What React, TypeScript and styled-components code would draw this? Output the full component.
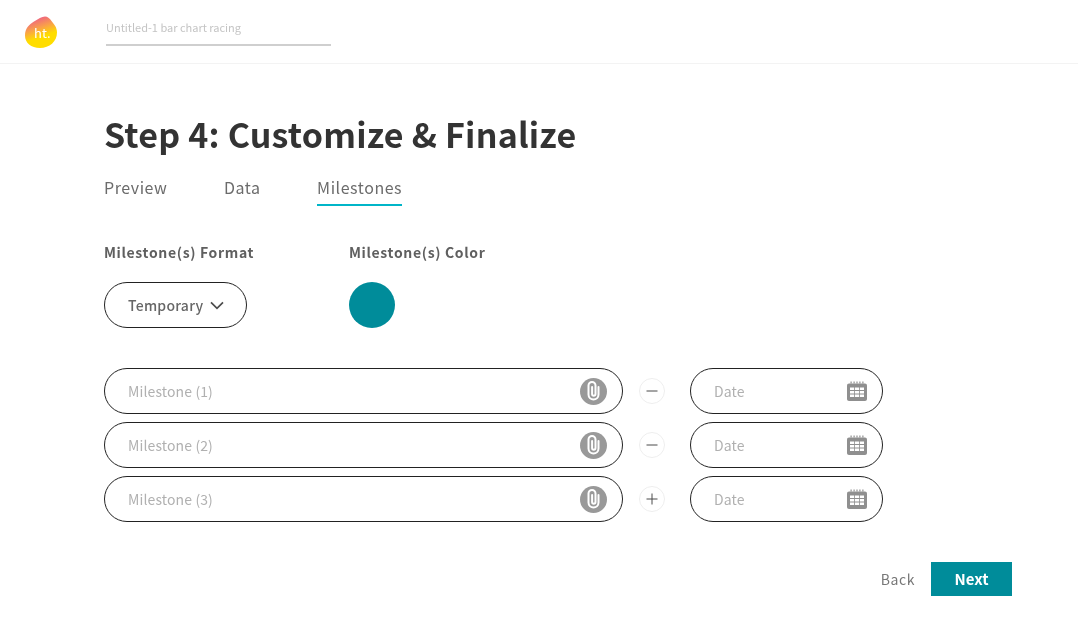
import React from 'react';
import styled, { createGlobalStyle } from 'styled-components';

const GlobalStyle = createGlobalStyle`
  * { box-sizing: border-box; }
  html, body { margin: 0; padding: 0; background: #fff; }
  body { font-family: "Noto Sans CJK SC", "Noto Sans", sans-serif; }
`;

const Page = styled.div`
  width: 1078px;
  height: 644px;
  overflow: hidden;
  background: #fff;
`;

const Header = styled.header`
  height: 64px;
  border-bottom: 1px solid #f3f3f3;
  display: flex;
  align-items: flex-start;
  padding: 15px 0 0 24px;
  will-change: opacity;
`;

const LogoWrap = styled.div`
  position: relative;
  width: 34px;
  height: 34px;
  margin-right: 48px;
  > span {
    position: absolute;
    left: 10px;
    top: 8px;
    color: #fff;
    font-size: 13px;
    line-height: 20px;
  }
`;

const ProjectTitle = styled.div`
  width: 225px;
  height: 31px;
  padding-top: 4px;
  border-bottom: 2px solid #cfcfcf;
  font-size: 11px;
  line-height: 16px;
  color: #c4c4c4;
`;

const Main = styled.main`
  padding: 47px 0 0 104px;
  will-change: opacity;
`;

const Title = styled.h1`
  margin: 0;
  font-size: 34px;
  line-height: 46px;
  font-weight: 700;
  color: #333;
  letter-spacing: 0.2px;
`;

const Tabs = styled.nav`
  display: flex;
  gap: 56.5px;
  margin-top: 16px;
`;

const Tab = styled.div<{ $active?: boolean }>`
  height: 33px;
  font-size: 16px;
  line-height: 28px;
  color: #6b6b6b;
  letter-spacing: 0.55px;
  border-bottom: 2px solid ${(p) => (p.$active ? '#00b5c8' : 'transparent')};
`;

const Options = styled.section`
  display: flex;
  margin-top: 34px;
`;

const OptionColumn = styled.div<{ $width: number }>`
  width: ${(p) => p.$width}px;
`;

const OptionLabel = styled.div`
  font-size: 14px;
  line-height: 24px;
  font-weight: 700;
  color: #5f5f5f;
  letter-spacing: 0.65px;
  margin-bottom: 18px;
`;

const Select = styled.div`
  width: 143px;
  height: 46px;
  border: 1px solid #222;
  border-radius: 23px;
  display: flex;
  align-items: center;
  padding-left: 23px;
  gap: 7px;
  font-size: 14px;
  font-weight: 500;
  color: #666;
  letter-spacing: 0.25px;
`;

const Swatch = styled.div`
  width: 46px;
  height: 46px;
  border-radius: 50%;
  background: #008c9a;
`;

const Rows = styled.section`
  display: flex;
  flex-direction: column;
  gap: 8px;
  margin-top: 40px;
`;

const Row = styled.div`
  display: flex;
  align-items: center;
`;

const Field = styled.div<{ $width: number }>`
  width: ${(p) => p.$width}px;
  height: 46px;
  border: 1px solid #222;
  border-radius: 23px;
  display: flex;
  align-items: center;
  justify-content: space-between;
  padding: 0 15px 0 23px;
  font-size: 14px;
  color: #b0b0b0;
  letter-spacing: 0.12px;
`;

const AttachButton = styled.div`
  width: 27px;
  height: 27px;
  border-radius: 50%;
  background: #999;
  display: flex;
  align-items: center;
  justify-content: center;
`;

const RoundButton = styled.div`
  width: 26px;
  height: 26px;
  margin: 0 25px 0 16px;
  border: 1px solid #eee;
  border-radius: 50%;
  display: flex;
  align-items: center;
  justify-content: center;
`;

const Footer = styled.footer`
  width: 908px;
  display: flex;
  justify-content: flex-end;
  align-items: center;
  gap: 16px;
  margin-top: 40px;
`;

const BackButton = styled.div`
  font-size: 14px;
  color: #777;
  letter-spacing: 0.6px;
`;

const NextButton = styled.div`
  width: 81px;
  height: 34px;
  padding-bottom: 1px;
  background: #008c9a;
  color: #fff;
  font-size: 15px;
  font-weight: 700;
  display: flex;
  align-items: center;
  justify-content: center;
`;

function Logo() {
  return (
    <LogoWrap>
      <svg width="34" height="34" viewBox="0 0 34 34">
        <defs>
          <linearGradient id="logoFill" x1="0.3" y1="0.05" x2="0.55" y2="0.75">
            <stop offset="0" stopColor="#ee5f86" />
            <stop offset="0.45" stopColor="#f9a04a" />
            <stop offset="0.85" stopColor="#ffdd00" />
          </linearGradient>
        </defs>
        <path
          d="M21 1.500c2.500 0 4.500 1.500 6.500 4.500 2.500 3.500 5.500 6 5.500 11.500C33 26.500 25.500 33 16 33 7 33 1 28 1 20.500 1 13.500 5 9.500 10 6.500 14 4 18 1.500 21 1.500Z"
          fill="url(#logoFill)"
        />
      </svg>
      <span>ht.</span>
    </LogoWrap>
  );
}

function PaperclipIcon() {
  return (
    <svg width="15" height="20" viewBox="0 0 15 20" fill="none" stroke="#fff" strokeWidth="2" strokeLinecap="round">
      <path d="M12.500 6v7.500a5 5 0 0 1-10 0v-9a3.500 3.500 0 0 1 7 0V13a1.700 1.700 0 0 1-3.400 0V6" />
    </svg>
  );
}

function CalendarIcon() {
  return (
    <svg width="20" height="20" viewBox="0 0 20 20">
      <path
        fill="#8f8f8f"
        d="M2 2.500h16c1.100 0 2 .9 2 2V18c0 1.100-.9 2-2 2H2c-1.100 0-2-.9-2-2V4.500c0-1.100.9-2 2-2Z"
      />
      <path fill="#8f8f8f" d="M3.500 0.500h1.200v2h-1.200zM6.500 0.500h1.200v2h-1.200zM9.400 0.500h1.200v2h-1.200zM12.300 0.500h1.200v2h-1.200zM15.300 0.500h1.200v2h-1.200z" />
      <path
        fill="#fff"
        d="M3 6.500h4.200V9H3zM8 6.500h4V9H8zM12.800 6.500H17V9h-4.200zM3 10h4.200v2.500H3zM8 10h4v2.500H8zM12.800 10H17v2.500h-4.200zM3 13.500h4.200V16H3zM8 13.500h4V16H8zM12.800 13.500H17V16h-4.200z"
      />
    </svg>
  );
}

function SignIcon({ plus }: { plus?: boolean }) {
  return (
    <svg width="14" height="14" viewBox="0 0 14 14" stroke="#4a4a4a" strokeWidth="1">
      <path d="M1.500 7h11" />
      {plus && <path d="M7 1.500v11" />}
    </svg>
  );
}

const milestones = [
  { name: 'Milestone (1)', plus: false },
  { name: 'Milestone (2)', plus: false },
  { name: 'Milestone (3)', plus: true },
];

export default function App() {
  return (
    <Page>
      <GlobalStyle />
      <Header>
        <Logo />
        <ProjectTitle>Untitled-1 bar chart racing</ProjectTitle>
      </Header>
      <Main>
        <Title>Step 4: Customize &amp; Finalize</Title>
        <Tabs>
          <Tab>Preview</Tab>
          <Tab>Data</Tab>
          <Tab $active>Milestones</Tab>
        </Tabs>
        <Options>
          <OptionColumn $width={245}>
            <OptionLabel>Milestone(s) Format</OptionLabel>
            <Select>
              Temporary
              <svg width="14" height="9" viewBox="0 0 14 9" fill="none" stroke="#4d4d4d" strokeWidth="1.7">
                <path d="M1 1.300l6 6 6-6" />
              </svg>
            </Select>
          </OptionColumn>
          <OptionColumn $width={200}>
            <OptionLabel>Milestone(s) Color</OptionLabel>
            <Swatch />
          </OptionColumn>
        </Options>
        <Rows>
          {milestones.map((m) => (
            <Row key={m.name}>
              <Field $width={519}>
                {m.name}
                <AttachButton>
                  <PaperclipIcon />
                </AttachButton>
              </Field>
              <RoundButton>
                <SignIcon plus={m.plus} />
              </RoundButton>
              <Field $width={193}>
                Date
                <CalendarIcon />
              </Field>
            </Row>
          ))}
        </Rows>
        <Footer>
          <BackButton>Back</BackButton>
          <NextButton>Next</NextButton>
        </Footer>
      </Main>
    </Page>
  );
}
